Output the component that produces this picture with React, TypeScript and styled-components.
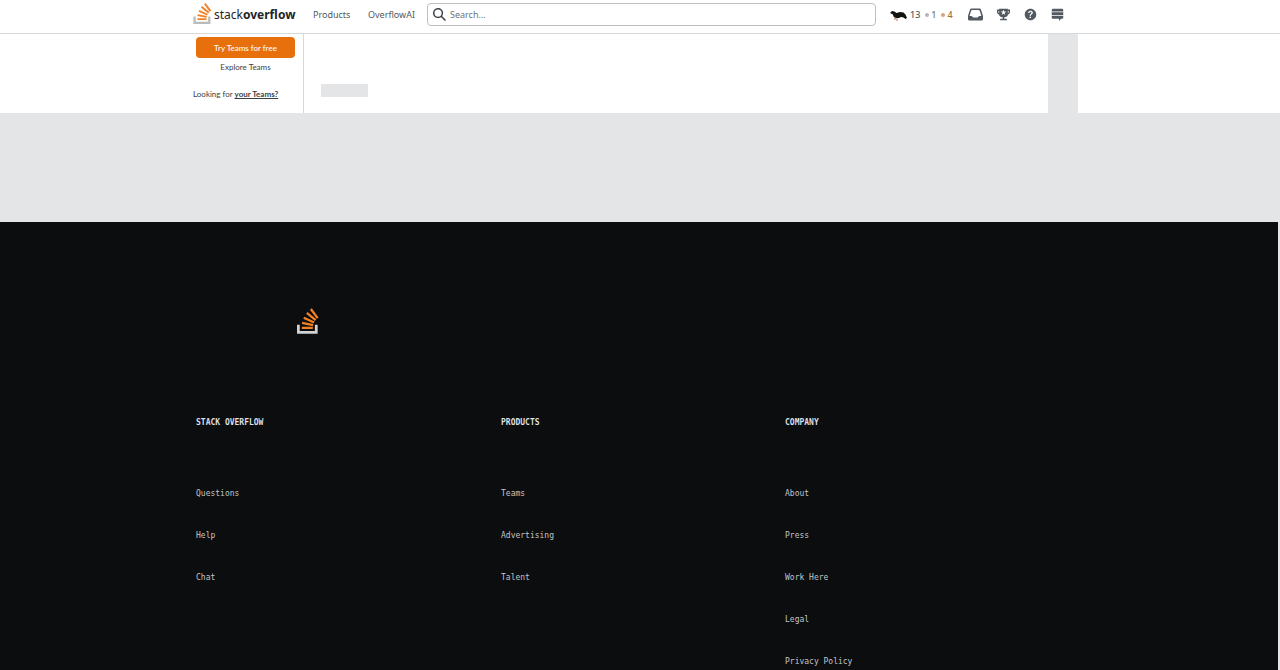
import React from "react";
import styled, { createGlobalStyle } from "styled-components";

const GlobalStyle = createGlobalStyle`
  *, *::before, *::after { box-sizing: border-box; }
  html { min-height: 100%; background: #e3e5e7; overflow-x: hidden; }
  body {
    margin: 0;
    font-family: "Noto Sans", "Open Sans", sans-serif;
    font-size: 9px;
    line-height: 12px;
    color: #3b4045;
  }
  a { color: inherit; text-decoration: none; }
`;

const Page = styled.div`
  display: flex;
  flex-direction: column;
  height: 100vh;
  overflow: hidden;
`;

const TopBar = styled.header`
  flex: none;
  background: #fff;
  border-bottom: 1px solid #d6d9dc;
`;

const Container = styled.div`
  width: 100%;
  max-width: 894px;
  margin: 0 auto;
`;

const TopBarInner = styled(Container)`
  display: flex;
  align-items: center;
  height: 33px;
  padding: 0 23px 4px 0;
`;

const LogoLink = styled.a`
  display: flex;
  align-items: center;
  gap: 2px;
  width: 120px;
  color: #222426;
  font-family: "Noto Sans", "Open Sans", sans-serif;
  font-size: 12px;
  line-height: 18px;
  white-space: nowrap;
  svg { margin-bottom: 2px; }
`;

const NavLink = styled.a`
  width: 55px;
  color: #525960;
`;

const SearchForm = styled.form`
  display: flex;
  flex: 1;
  align-items: center;
  gap: 4px;
  height: 23px;
  margin: 0 14px 0 4px;
  padding: 0 5px;
  border: 1px solid #babfc4;
  border-radius: 4px;
  color: #3b4045;
`;

const SearchInput = styled.input`
  flex: 1;
  min-width: 0;
  padding: 0;
  border: 0;
  outline: 0;
  background: transparent;
  font: inherit;
  color: inherit;
  &::placeholder { color: #6a737c; opacity: 1; }
`;

const ProfileLink = styled.a`
  display: flex;
  align-items: center;
  gap: 3px;
  width: 78px;
  color: #525960;
  font-weight: 500;
`;

const Badge = styled.span<{ $dot: string; $ink: string }>`
  display: flex;
  align-items: center;
  gap: 2px;
  margin-left: 2px;
  color: ${(p) => p.$ink};
  &::before {
    content: "";
    width: 4px;
    height: 4px;
    border-radius: 2px;
    background: ${(p) => p.$dot};
  }
`;

const IconGroup = styled.div`
  display: flex;
  flex: none;
  align-items: center;
  gap: 14px;
`;

const IconButton = styled.button`
  display: flex;
  padding: 0;
  border: 0;
  background: transparent;
  color: #525960;
  cursor: pointer;
`;

const Main = styled.main`
  display: flex;
  flex: none;
  padding-left: max(0px, calc(50% - 447px));
  background: #fff;
`;

const Sidebar = styled.aside`
  display: flex;
  flex: none;
  flex-direction: column;
  width: 111px;
  padding: 3px 8px 13px 0;
  border-right: 1px solid #d6d9dc;
  font-family: Lato, "Open Sans", sans-serif;
  font-size: 8px;
`;

const TeamsButton = styled.button`
  height: 21px;
  margin-left: 3px;
  padding: 0;
  border: 0;
  border-radius: 4px;
  background: #e7700d;
  color: #fff;
  font: inherit;
  font-weight: 500;
  cursor: pointer;
`;

const ExploreLink = styled.a`
  margin: 3px 0 15px 3px;
  text-align: center;
`;

const TeamsNote = styled.p`
  margin: 0;
  white-space: nowrap;
  a { font-weight: 700; text-decoration: underline; }
`;

const Content = styled.section`
  flex: 1;
  max-width: 744px;
  padding: 50px 17px 0;
`;

const Placeholder = styled.div`
  width: 47px;
  height: 13px;
  background: #e3e5e7;
`;

const Rail = styled.div`
  flex: none;
  width: 30px;
  background: #e3e5e7;
`;

const Footer = styled.footer`
  flex: 1 0 auto;
  margin: 109px 2px 0 0;
  padding: 86px 0 0;
  background: #0c0d0e;
  color: #c2c5c8;
  font-family: "DejaVu Sans Mono", monospace;
  font-size: 8px;
`;

const FooterMark = styled.a`
  display: block;
  width: 22px;
  margin-left: 105px;
  svg { display: block; }
`;

const FooterColumns = styled.div`
  display: grid;
  grid-template-columns: 305fr 284fr 301fr;
  margin-top: 83px;
  padding-left: 4px;
`;

const ColumnTitle = styled.h2`
  margin: 0 0 59px;
  color: #dcdfe1;
  font-size: inherit;
  line-height: inherit;
  font-weight: 700;
  text-transform: uppercase;
`;

const LinkList = styled.ul`
  display: grid;
  row-gap: 30px;
  margin: 0;
  padding: 0;
  list-style: none;
  line-height: 12px;
  li { height: 12px; }
`;

const Mark = ({ width, height, base }: { width: number; height: number; base: string }) => (
  <svg width={width} height={height} viewBox="0 0 32 37" aria-hidden="true">
    <path d="M26 33v-9h4v13H0V24h4v9h22Z" fill={base} />
    <path
      d="m21.5 0-2.7 2 9.9 13.3 2.7-2L21.5 0ZM26 18.4 13.3 7.8l2.1-2.5 12.7 10.6-2.1 2.5ZM9.1 15.2l15 7 1.4-3-15-7-1.4 3Zm14 10.79.68-2.95-16.1-3.35L7 23l16.1 2.99ZM23 30H7v-3h16v3Z"
      fill="#f48024"
    />
  </svg>
);

const Icon = ({ d, size, box = 18 }: { d: string; size: number; box?: number }) => (
  <svg width={size} height={size} viewBox={`0 0 ${box} ${box}`} fill="currentColor" fillRule="evenodd" aria-hidden="true">
    <path d={d} />
  </svg>
);

const Avatar = () => (
  <svg width="17" height="12" viewBox="0 0 34 24" aria-hidden="true">
    <path d="M10 14v6M14 15v6M8 20h4M12 22h4" stroke="#a56a45" strokeWidth="1.5" />
    <path
      d="M0 8 4 4 9 5 13 8 20 6 27 7 31 11 34 18 31 20 27 17 22 16 18 18 12 18 7 15 6 11Z"
      fill="#12150f"
    />
  </svg>
);

const paths = {
  search: "m18 16.5-5.14-5.18h-.35a7 7 0 1 0-1.19 1.19v.35L16.5 18zM12 7A5 5 0 1 1 2 7a5 5 0 0 1 10 0",
  inbox:
    "M4.63 2h10.74a2 2 0 0 1 1.85 1.35L20 11.79V16a2 2 0 0 1-2 2H2a2 2 0 0 1-2-2v-4.21l2.78-8.44A2 2 0 0 1 4.63 2m8.28 12 2-2h2.95l-2.44-7.32a1 1 0 0 0-.95-.68H5.35a1 1 0 0 0-.95.68L1.96 12h2.95l2 2z",
  trophy:
    "M15 2V1H3v1H0v4c0 1.6 1.4 3 3 3v1c.4 1.5 3 2.6 5 3v2H5s-1 1.5-1 2h10c0-.4-1-2-1-2h-3v-2c2-.4 4.6-1.5 5-3V9c1.6-.2 3-1.4 3-3V2zM3 7c-.5 0-1-.5-1-1V4h1zm8.4 2.5L9 8 6.6 9.4l1-2.7L5 5h3l1-2.7L10 5h2.8l-2.3 1.8zM16 6c0 .5-.5 1-1 1V4h1z",
  help:
    "M9 1C4.64 1 1 4.64 1 9s3.64 8 8 8 8-3.64 8-8-3.64-8-8-8m.81 12.13c-.02.71-.55 1.15-1.24 1.13-.66-.02-1.17-.49-1.15-1.2.02-.72.56-1.18 1.22-1.16.7.03 1.2.51 1.17 1.23M11.77 8c-.59.66-1.78 1.09-2.05 1.97a4 4 0 0 0-.09.75c0 .05-.03.16-.18.16H7.88c-.16 0-.18-.1-.18-.15.06-1.35.66-2.2 1.83-2.88.39-.29.7-.75.7-1.24.01-1.24-1.64-1.82-2.35-.72-.21.33-.18.73-.18 1.1H5.75c0-1.97 1.03-3.26 3.03-3.26 1.75 0 3.47.87 3.47 2.83 0 .57-.2 1.05-.48 1.44",
  sites:
    "M15 1H3a2 2 0 0 0-2 2v2h16V3a2 2 0 0 0-2-2M1 13c0 1.1.9 2 2 2h8v3l3-3h1a2 2 0 0 0 2-2v-2H1zm16-7H1v4h16z",
};

const columns = [
  { title: "Stack Overflow", links: ["Questions", "Help", "Chat"] },
  { title: "Products", links: ["Teams", "Advertising", "Talent"] },
  { title: "Company", links: ["About", "Press", "Work Here", "Legal", "Privacy Policy"] },
];

export default function App() {
  return (
    <Page>
      <GlobalStyle />
      <TopBar>
        <TopBarInner>
          <LogoLink href="#">
            <Mark width={19} height={21} base="#bcbbbb" />
            <span>
              stack<b>overflow</b>
            </span>
          </LogoLink>
          <NavLink href="#products">Products</NavLink>
          <NavLink href="#ai">OverflowAI</NavLink>
          <SearchForm role="search">
            <Icon d={paths.search} size={13} />
            <SearchInput type="text" placeholder="Search…" aria-label="Search" />
          </SearchForm>
          <ProfileLink href="#profile">
            <Avatar />
            <span>13</span>
            <Badge $dot="#b4b8bc" $ink="#7b746a">1</Badge>
            <Badge $dot="#d1a684" $ink="#a8703f">4</Badge>
          </ProfileLink>
          <IconGroup>
            <IconButton aria-label="Inbox"><Icon d={paths.inbox} size={15} box={20} /></IconButton>
            <IconButton aria-label="Achievements"><Icon d={paths.trophy} size={13} /></IconButton>
            <IconButton aria-label="Help"><Icon d={paths.help} size={13} /></IconButton>
            <IconButton aria-label="Sites"><Icon d={paths.sites} size={13} /></IconButton>
          </IconGroup>
        </TopBarInner>
      </TopBar>
      <Main>
        <Sidebar>
          <TeamsButton type="button">Try Teams for free</TeamsButton>
          <ExploreLink href="#explore">Explore Teams</ExploreLink>
          <TeamsNote>
            Looking for <a href="#teams">your Teams?</a>
          </TeamsNote>
        </Sidebar>
        <Content>
          <Placeholder />
        </Content>
        <Rail />
      </Main>
      <Footer>
        <Container>
          <FooterMark href="#" aria-label="Home">
            <Mark width={22} height={26} base="#d0d2d4" />
          </FooterMark>
          <FooterColumns>
            {columns.map((column) => (
              <nav key={column.title} aria-label={column.title}>
                <ColumnTitle>{column.title}</ColumnTitle>
                <LinkList>
                  {column.links.map((link) => (
                    <li key={link}>
                      <a href="#footer">{link}</a>
                    </li>
                  ))}
                </LinkList>
              </nav>
            ))}
          </FooterColumns>
        </Container>
      </Footer>
    </Page>
  );
}
